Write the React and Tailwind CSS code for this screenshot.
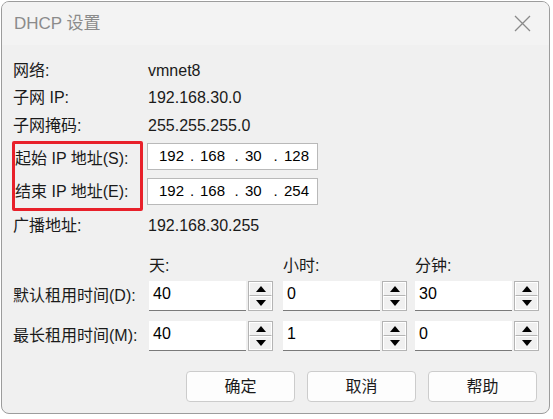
import React from "react";

const font = { fontFamily: '"Liberation Sans", "Noto Sans CJK SC", sans-serif' };

function Spin({ value }) {
  return (
    <div className="flex h-[30px] w-[124px] items-stretch">
      <div className="w-[97px] shrink-0 bg-white border-b border-[#7a7a7a] pl-[4px] pt-[3px] text-[16px] leading-[20px] text-black">
        {value}
      </div>
      <div className="ml-[2px] flex w-[25px] shrink-0 flex-col border border-[#b4b4b4]">
        <div className="flex flex-1 items-center justify-center border border-white bg-[#f0f0f0] border-b-[#b4b4b4]">
          <div className="h-0 w-0 border-x-[5px] border-b-[6px] border-x-transparent border-b-black" />
        </div>
        <div className="flex flex-1 items-center justify-center border border-white bg-[#f0f0f0]">
          <div className="h-0 w-0 border-x-[5px] border-t-[6px] border-x-transparent border-t-black" />
        </div>
      </div>
    </div>
  );
}

function IpBox({ parts }) {
  return (
    <div className="flex h-[27px] w-[171px] items-center border border-[#b9b9b9] bg-white text-[15px] text-black">
      <span className="w-[36px] text-right">{parts[0]}</span>
      <span className="w-[16px] text-center">.</span>
      <span className="w-[28px] text-left">{parts[1]}</span>
      <span className="w-[17px] text-center">.</span>
      <span className="w-[22px] text-left">{parts[2]}</span>
      <span className="w-[17px] text-center">.</span>
      <span className="text-left">{parts[3]}</span>
    </div>
  );
}

export default function App() {
  return (
    <div className="h-[419px] w-[553px] overflow-hidden bg-white" style={font}>
      <div className="ml-[1px] mt-[1px] flex h-[413px] w-[549px] flex-col overflow-hidden rounded-[8px] border border-[#9c9c9c] bg-[#f0f0f0] text-[16px] text-[#1a1a1a]">
        {/* title bar */}
        <div className="flex h-[43px] shrink-0 items-center justify-between bg-[#f3f3f3] pl-[12px] pr-[15px]">
          <span className="text-[17px] text-[#8b8b8b]">DHCP 设置</span>
          <svg width="17" height="17" viewBox="0 0 17 17" className="mr-[3px]">
            <path d="M1 1 L16 16 M16 1 L1 16" stroke="#8a8a8a" strokeWidth="1.3" />
          </svg>
        </div>

        {/* body */}
        <div className="flex flex-col pl-[11px] pr-[10px] pt-[12px]">
          <div className="flex h-[27px] items-center">
            <span className="w-[135px]">网络:</span>
            <span>vmnet8</span>
          </div>
          <div className="flex h-[28px] items-center">
            <span className="w-[135px]">子网 IP:</span>
            <span>192.168.30.0</span>
          </div>
          <div className="flex h-[27px] items-center">
            <span className="w-[135px]">子网掩码:</span>
            <span>255.255.255.0</span>
          </div>

          <div className="mt-[2px] flex">
            <div className="-ml-[1px] flex h-[70px] w-[131px] shrink-0 flex-col justify-around rounded-[2px] border-[3px] border-[#e8202a]">
              <span className="-mt-[1px] whitespace-nowrap">起始 IP 地址(S):</span>
              <span className="whitespace-nowrap">结束 IP 地址(E):</span>
            </div>
            <div className="ml-[4px] flex flex-col gap-[8px] pt-[2px]">
              <IpBox parts={["192", "168", "30", "128"]} />
              <IpBox parts={["192", "168", "30", "254"]} />
            </div>
          </div>

          <div className="flex h-[30px] items-center">
            <span className="w-[135px]">广播地址:</span>
            <span>192.168.30.255</span>
          </div>

          <div className="mt-[14px] grid grid-cols-[136px_134px_132px_124px] items-center">
            <span className="h-[22px]" />
            <span className="h-[22px] leading-[22px]">天:</span>
            <span className="h-[22px] leading-[22px]">小时:</span>
            <span className="h-[22px] leading-[22px]">分钟:</span>

            <span className="mt-[4px] whitespace-nowrap">默认租用时间(D):</span>
            <div className="mt-[4px]"><Spin value="40" /></div>
            <div className="mt-[4px]"><Spin value="0" /></div>
            <div className="mt-[4px]"><Spin value="30" /></div>

            <span className="mt-[10px] whitespace-nowrap">最长租用时间(M):</span>
            <div className="mt-[10px]"><Spin value="40" /></div>
            <div className="mt-[10px]"><Spin value="1" /></div>
            <div className="mt-[10px]"><Spin value="0" /></div>
          </div>

          <div className="mt-[20px] flex justify-end gap-[12px] pr-[2px]">
            {["确定", "取消", "帮助"].map((t) => (
              <button
                key={t}
                className="flex h-[31px] w-[109px] items-center justify-center rounded-[4px] border border-[#cccccc] bg-[#fdfdfd] text-[16px] text-[#1a1a1a]"
              >
                {t}
              </button>
            ))}
          </div>
        </div>
      </div>
    </div>
  );
}
